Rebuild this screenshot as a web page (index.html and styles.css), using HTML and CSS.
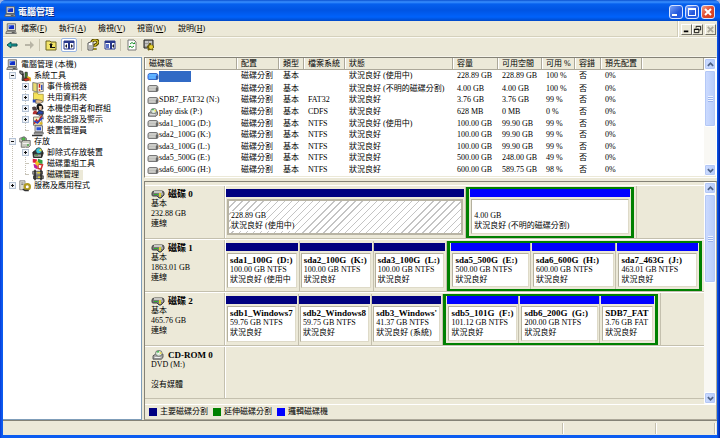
FILE: index.html
```html
<!DOCTYPE html>
<html lang="zh-TW">
<head>
    <meta charset="utf-8">
    <title>電腦管理</title>
    <link rel="stylesheet" href="styles.css">
</head>
<body>

    <!-- shared icons -->
    <svg class="sprite" aria-hidden="true">
        <symbol id="i-computer" viewBox="0 0 16 16">
            <path d="M3 1h11v9H3z" fill="#d8d8d0" stroke="#555"/>
            <path d="M5 3h7v5H5z" fill="#1230c8"/>
            <path d="M5 3h4L5 6z" fill="#5c8cff"/>
            <path d="M2 11h12l1 3H1z" fill="#c8c8c0" stroke="#555"/>
            <path d="M9 12.500h4" stroke="#222"/>
        </symbol>
        <symbol id="i-tools" viewBox="0 0 16 16">
            <path d="M1 1l4 1 1 4-2 1-3-3z" fill="#777" stroke="#222"/>
            <path d="M5 5l3 9H4z" fill="#555" stroke="#222"/>
            <path d="M8 3h3v8H8z" fill="#4a8a30" stroke="#222"/>
            <path d="M6 12l8-2 2 3-8 2z" fill="#d83020" stroke="#521"/>
            <path d="M11 9l4 2v4" stroke="#e0b020" stroke-width="2" fill="none"/>
        </symbol>
        <symbol id="i-event" viewBox="0 0 16 16">
            <path d="M1 2l6 1v12l-6-2z" fill="#e8dc70" stroke="#666"/>
            <path d="M7 3l8-1v12l-8 1z" fill="#fff8d0" stroke="#555"/>
            <path d="M10 4v5M10 11v2" stroke="#d02020" stroke-width="2"/>
            <path d="M13 5v7" stroke="#3050c0" stroke-width="2"/>
        </symbol>
        <symbol id="i-share" viewBox="0 0 16 16">
            <path d="M2 1h5l1 2h7v9H2z" fill="#f5e25a" stroke="#a09030"/>
            <path d="M1 10h5v4H1z" fill="#2848c0"/>
            <path d="M5 10l7 1 3 2-4 2H5z" fill="#e8c090" stroke="#555"/>
        </symbol>
        <symbol id="i-users" viewBox="0 0 16 16">
            <path d="M6 4q1-4 5-3 4 1 4 6-1 3-4 3-5 0-5-6z" fill="#181818"/>
            <path d="M9 4h4v5l-3 1z" fill="#f0d0b0"/>
            <path d="M0 6q3-3 6 0l1 4H1z" fill="#504040"/>
            <path d="M1 15q0-5 4-5l5 5z" fill="#b03030"/>
            <path d="M6 15l3-5 6 1v4z" fill="#2848b0" stroke="#111"/>
        </symbol>
        <symbol id="i-perf" viewBox="0 0 16 16">
            <path d="M2 4h11v11H2z" fill="#f4f0c0" stroke="#555"/>
            <path d="M3 13l3-5 2 3 5-9" stroke="#c02020" stroke-width="2" fill="none"/>
            <path d="M3 9l4 3 7-7" stroke="#2040d0" stroke-width="2" fill="none"/>
            <path d="M9 2l5-1 1 6" stroke="#222" fill="none"/>
            <path d="M10 11h4v3h-4z" fill="#e0b820"/>
        </symbol>
        <symbol id="i-device" viewBox="0 0 16 16">
            <path d="M4 1h10v8H4z" fill="#ddd" stroke="#555"/>
            <path d="M6 3h6v4H6z" fill="#2850d8"/>
            <path d="M3 10h12v2H3z" fill="#bbb" stroke="#555"/>
            <path d="M0 13h14v2H0z" fill="#333"/>
        </symbol>
        <symbol id="i-storage" viewBox="0 0 16 16">
            <path d="M1 3l6-2 3 2v5H1z" fill="#d0d0c8" stroke="#666"/>
            <circle cx="6" cy="4" r="2.500" fill="#48c040" stroke="#666"/>
            <path d="M3 8l3-2h9v7l-2 2H3z" fill="#c8c8c0" stroke="#555"/>
            <path d="M5 10h8" stroke="#fff"/>
            <path d="M11 12h2" stroke="#20a020" stroke-width="2"/>
        </symbol>
        <symbol id="i-removable" viewBox="0 0 16 16">
            <path d="M1 7l4-3h8l2 4-2 6H2z" fill="#333" stroke="#111"/>
            <circle cx="9" cy="5" r="4" fill="#40c8d8" stroke="#333"/>
            <path d="M9 5l3-3 1 4z" fill="#f0e040"/>
            <path d="M3 10h9v3H3z" fill="#a8a8a0"/>
            <path d="M4 11h4" stroke="#20a020"/>
        </symbol>
        <symbol id="i-defrag" viewBox="0 0 16 16">
            <path d="M1 1l6 1v5l-6-1z" fill="#e02040"/>
            <path d="M8 1l6 2v5l-6-1z" fill="#30a040"/>
            <path d="M2 8l5 1v6l-4-2z" fill="#c020a0"/>
            <path d="M8 8l6 1-2 6-4-1z" fill="#fff" stroke="#d03030" stroke-width="2"/>
            <path d="M6 3l4 4-3 4-3-4z" fill="#f0c020"/>
        </symbol>
        <symbol id="i-diskmgmt" viewBox="0 0 16 16">
            <path d="M1 3h13v4H1z" fill="#aaa" stroke="#333"/>
            <path d="M2 9h13v4H2z" fill="#888" stroke="#222"/>
            <path d="M4 1v14M12 1v14" stroke="#222" stroke-width="2"/>
            <path d="M7 5h4M8 11h3" stroke="#e0d030" stroke-width="2"/>
        </symbol>
        <symbol id="i-services" viewBox="0 0 16 16">
            <path d="M1 1h7v12H1z" fill="#dcdcd4" stroke="#777"/>
            <path d="M3 4h3M3 6h3" stroke="#666"/>
            <circle cx="11" cy="9" r="3.500" fill="none" stroke="#b09a20" stroke-width="3"/>
            <path d="M5 12l3 2h5" stroke="#333" stroke-width="2" fill="none"/>
        </symbol>
        <symbol id="i-volume" viewBox="0 0 12 8">
            <path d="M1 3q0-2 2-2h6q2 0 2 2v3q0 1-2 1H2Q1 7 1 6z" fill="#b4b4b0" stroke="#777"/>
            <path d="M2 2h7v1H2z" fill="#e4e4e0"/>
            <path d="M9 3h2v3l-1 1H9z" fill="#666"/>
            <path d="M2 4h6v2H2z" fill="#ccccc8"/>
        </symbol>
        <symbol id="i-cdvolume" viewBox="0 0 14 12">
            <path d="M1 7l3-2h9v4l-2 2H1z" fill="#aaa" stroke="#444"/>
            <ellipse cx="8" cy="4" rx="4" ry="3.500" fill="#d8e8d8" stroke="#666"/>
            <path d="M8 4L5 2l3-1z" fill="#30b040"/>
            <path d="M8 4l3-2v3z" fill="#f0d840"/>
            <circle cx="8" cy="4" r="1" fill="#fff"/>
            <path d="M3 9h7" stroke="#fff"/>
        </symbol>
        <symbol id="i-drive" viewBox="0 0 14 10">
            <path d="M1 4q0-2 3-2h7q2 0 2 2v2L10 9H8L6 7H2Q1 7 1 6z" fill="#777" stroke="#444"/>
            <path d="M3 2h8v2H3z" fill="#c8c8c4"/>
            <path d="M3 5h4v1H3z" fill="#30b030"/>
            <path d="M8 4h2v4H8z" fill="#d8d030"/>
            <path d="M11 4v2" stroke="#ddd"/>
        </symbol>
        <symbol id="i-up" viewBox="0 0 8 8"><path d="M1 5.500l3-3 3 3" fill="none" stroke="#4d6185" stroke-width="2"/></symbol>
        <symbol id="i-down" viewBox="0 0 8 8"><path d="M1 2.500l3 3 3-3" fill="none" stroke="#4d6185" stroke-width="2"/></symbol>
        <symbol id="i-plus" viewBox="0 0 7 7"><path d="M2 3h3v1H2zM3 2h1v3H3z" fill="#111"/></symbol>
        <symbol id="i-minus" viewBox="0 0 7 7"><path d="M2 3h3v1H2z" fill="#111"/></symbol>
    </svg>

    <div class="window">
        <header class="title-bar">
            <svg class="icon"><use href="#i-computer"/></svg>
            <h1>電腦管理</h1>
            <div class="window-buttons">
                <button aria-label="最小化"><svg viewBox="0 0 12 12"><path d="M2 8h5v2H2z" fill="#fff"/></svg></button>
                <button aria-label="最大化"><svg viewBox="0 0 12 12"><path d="M2 2h8v8H2zM3 4v5h6V4z" fill="#fff" fill-rule="evenodd"/></svg></button>
                <button class="close" aria-label="關閉"><svg viewBox="0 0 12 12"><path d="M3 3l6 6M9 3l-6 6" stroke="#fff" stroke-width="2"/></svg></button>
            </div>
        </header>

        <nav class="menu-bar">
            <svg class="icon"><use href="#i-computer"/></svg>
            <div class="menus">
                <button>檔案(<u>F</u>)</button>
                <button>執行(<u>A</u>)</button>
                <button>檢視(<u>V</u>)</button>
                <button>視窗(<u>W</u>)</button>
                <button>說明(<u>H</u>)</button>
            </div>
            <div class="child-buttons">
                <button aria-label="最小化"><svg viewBox="0 0 10 10"><path d="M2 6h5v2H2z"/></svg></button>
                <button aria-label="還原"><svg viewBox="0 0 10 10"><path d="M3.500 3V1.500h5v4H7M1.500 4.500h5v4h-5zM1.500 5h5" fill="none" stroke="#000"/></svg></button>
                <button class="apart" aria-label="關閉"><svg viewBox="0 0 10 10"><path d="M2 2l6 6M8 2l-6 6" stroke="#aca899" stroke-width="2"/></svg></button>
            </div>
        </nav>

        <div class="toolbar">
            <button aria-label="上一頁"><svg viewBox="0 0 12 12"><path d="M1 6l4-3v2h6v2H5v2z" fill="#18a8a0" stroke="#0c4c50"/></svg></button>
            <button aria-label="下一頁"><svg viewBox="0 0 12 12"><path d="M11 6L7 2v3H2v2h5v3z" fill="#b8b5a6"/></svg></button>
            <span class="separator"></span>
            <button aria-label="上一層"><svg viewBox="0 0 12 12"><path d="M1 2h4l1 1h5v8H1z" fill="#f2e468" stroke="#6c6420"/><path d="M4 6l2-2 2 2zM5 6h2v2h3v1H5z" fill="#111"/></svg></button>
            <button class="pressed" aria-label="顯示樹狀目錄"><svg viewBox="0 0 12 12"><path d="M1 2h10v8H1z" fill="#fff" stroke="#28388c"/><path d="M1 2h10v2H1zM5 4h2v6H5z" fill="#28388c"/><path d="M2 7l2-2v4zM10 7L8 5v4z" fill="#222"/></svg></button>
            <span class="separator"></span>
            <button aria-label="說明"><svg viewBox="0 0 12 12"><path d="M1 4l5-2v9H1z" fill="#fff" stroke="#555"/><path d="M2 7h3M2 9h3" stroke="#666"/><path d="M5 3q0-2 3-2t3 2q0 2-3 3v2M8 9v2" fill="none" stroke="#554800" stroke-width="3"/><path d="M5 3q0-2 3-2t3 2q0 2-3 3v2M8 9v2" fill="none" stroke="#ecd830"/></svg></button>
            <button aria-label="顯示窗格"><svg viewBox="0 0 12 12"><path d="M1 2h10v8H1z" fill="#fff" stroke="#28388c"/><path d="M1 2h10v2H1zM6 4h2v6H6z" fill="#28388c"/><path d="M2 5h3v4H2z" fill="#5870c8"/><path d="M10 5v4L8 7z" fill="#222"/></svg></button>
            <span class="separator"></span>
            <button aria-label="重新整理"><svg viewBox="0 0 12 12"><path d="M2 1h6l2 2v8H2z" fill="#fff" stroke="#777"/><path d="M4 5q2-3 4 0M8 7q-2 3-4 0" fill="none" stroke="#189028"/><path d="M7 5h2V3zM5 7H3v2z" fill="#189028"/></svg></button>
            <button aria-label="設定"><svg viewBox="0 0 12 12"><path d="M1 1h9v8H1z" fill="#999" stroke="#222"/><path d="M2 3h3M6 3h3M2 6h3" stroke="#eee"/><path d="M7 4v7M4 8h7M5 6l5 5M10 6l-5 5" stroke="#6c6010" stroke-width="2"/><circle cx="8" cy="8" r="2" fill="#e8d030"/></svg></button>
        </div>

        <main>
            <aside class="tree-pane">
                <ul class="tree">
                    <li>
                        <div class="node root"><svg class="icon"><use href="#i-computer"/></svg><span>電腦管理 (本機)</span></div>
                        <ul>
                            <li>
                                <div class="node"><button class="toggle" aria-label="摺疊"><svg><use href="#i-minus"/></svg></button><svg class="icon"><use href="#i-tools"/></svg><span>系統工具</span></div>
                                <ul>
                                    <li><div class="node"><button class="toggle" aria-label="展開"><svg><use href="#i-plus"/></svg></button><svg class="icon"><use href="#i-event"/></svg><span>事件檢視器</span></div></li>
                                    <li><div class="node"><button class="toggle" aria-label="展開"><svg><use href="#i-plus"/></svg></button><svg class="icon"><use href="#i-share"/></svg><span>共用資料夾</span></div></li>
                                    <li><div class="node"><button class="toggle" aria-label="展開"><svg><use href="#i-plus"/></svg></button><svg class="icon"><use href="#i-users"/></svg><span>本機使用者和群組</span></div></li>
                                    <li><div class="node"><button class="toggle" aria-label="展開"><svg><use href="#i-plus"/></svg></button><svg class="icon"><use href="#i-perf"/></svg><span>效能記錄及警示</span></div></li>
                                    <li><div class="node"><i class="leaf"></i><svg class="icon"><use href="#i-device"/></svg><span>裝置管理員</span></div></li>
                                </ul>
                            </li>
                            <li>
                                <div class="node"><button class="toggle" aria-label="摺疊"><svg><use href="#i-minus"/></svg></button><svg class="icon"><use href="#i-storage"/></svg><span>存放</span></div>
                                <ul>
                                    <li><div class="node"><button class="toggle" aria-label="展開"><svg><use href="#i-plus"/></svg></button><svg class="icon"><use href="#i-removable"/></svg><span>卸除式存放裝置</span></div></li>
                                    <li><div class="node"><i class="leaf"></i><svg class="icon"><use href="#i-defrag"/></svg><span>磁碟重組工具</span></div></li>
                                    <li><div class="node selected"><i class="leaf"></i><svg class="icon"><use href="#i-diskmgmt"/></svg><span>磁碟管理</span></div></li>
                                </ul>
                            </li>
                            <li><div class="node"><button class="toggle" aria-label="展開"><svg><use href="#i-plus"/></svg></button><svg class="icon"><use href="#i-services"/></svg><span>服務及應用程式</span></div></li>
                        </ul>
                    </li>
                </ul>
            </aside>

            <div class="content">
                <section class="volume-pane">
                    <table>
                        <colgroup>
                            <col class="c-name"><col class="c-layout"><col class="c-type"><col class="c-fs"><col class="c-status">
                            <col class="c-size"><col class="c-free"><col class="c-percent"><col class="c-fault"><col class="c-over"><col>
                        </colgroup>
                        <thead>
                            <tr><th>磁碟區</th><th>配置</th><th>類型</th><th>檔案系統</th><th>狀態</th><th>容量</th><th>可用空間</th><th>可用 %</th><th>容錯</th><th>預先配置</th><th></th></tr>
                        </thead>
                        <tbody>
                            <tr class="selected"><td><svg class="vol"><use href="#i-volume"/></svg><span></span></td><td>磁碟分割</td><td>基本</td><td></td><td>狀況良好 (使用中)</td><td>228.89 GB</td><td>228.89 GB</td><td>100 %</td><td>否</td><td>0%</td><td></td></tr>
                            <tr><td><svg class="vol"><use href="#i-volume"/></svg></td><td>磁碟分割</td><td>基本</td><td></td><td>狀況良好 (不明的磁碟分割)</td><td>4.00 GB</td><td>4.00 GB</td><td>100 %</td><td>否</td><td>0%</td><td></td></tr>
                            <tr><td><svg class="vol"><use href="#i-volume"/></svg>SDB7_FAT32 (N:)</td><td>磁碟分割</td><td>基本</td><td>FAT32</td><td>狀況良好</td><td>3.76 GB</td><td>3.76 GB</td><td>99 %</td><td>否</td><td>0%</td><td></td></tr>
                            <tr><td><svg class="vol"><use href="#i-cdvolume"/></svg>play disk (P:)</td><td>磁碟分割</td><td>基本</td><td>CDFS</td><td>狀況良好</td><td>628 MB</td><td>0 MB</td><td>0 %</td><td>否</td><td>0%</td><td></td></tr>
                            <tr><td><svg class="vol"><use href="#i-volume"/></svg>sda1_100G (D:)</td><td>磁碟分割</td><td>基本</td><td>NTFS</td><td>狀況良好 (使用中)</td><td>100.00 GB</td><td>99.90 GB</td><td>99 %</td><td>否</td><td>0%</td><td></td></tr>
                            <tr><td><svg class="vol"><use href="#i-volume"/></svg>sda2_100G (K:)</td><td>磁碟分割</td><td>基本</td><td>NTFS</td><td>狀況良好</td><td>100.00 GB</td><td>99.90 GB</td><td>99 %</td><td>否</td><td>0%</td><td></td></tr>
                            <tr><td><svg class="vol"><use href="#i-volume"/></svg>sda3_100G (L:)</td><td>磁碟分割</td><td>基本</td><td>NTFS</td><td>狀況良好</td><td>100.00 GB</td><td>99.90 GB</td><td>99 %</td><td>否</td><td>0%</td><td></td></tr>
                            <tr><td><svg class="vol"><use href="#i-volume"/></svg>sda5_500G (E:)</td><td>磁碟分割</td><td>基本</td><td>NTFS</td><td>狀況良好</td><td>500.00 GB</td><td>248.00 GB</td><td>49 %</td><td>否</td><td>0%</td><td></td></tr>
                            <tr><td><svg class="vol"><use href="#i-volume"/></svg>sda6_600G (H:)</td><td>磁碟分割</td><td>基本</td><td>NTFS</td><td>狀況良好</td><td>600.00 GB</td><td>589.75 GB</td><td>98 %</td><td>否</td><td>0%</td><td></td></tr>
                        </tbody>
                    </table>
                    <div class="scrollbar">
                        <button aria-label="向上捲動"><svg><use href="#i-up"/></svg></button>
                        <div class="track"><div class="thumb" style="height: 61%"><i></i></div></div>
                        <button aria-label="向下捲動"><svg><use href="#i-down"/></svg></button>
                    </div>
                </section>

                <section class="disk-pane">
                    <div class="disk-scroll">
                        <div class="disks">
                            <div class="disk">
                                <div class="disk-info">
                                    <h2><svg><use href="#i-drive"/></svg>磁碟 0</h2>
                                    <p>基本</p><p>232.88 GB</p><p>連線</p>
                                </div>
                                <div class="space">
                                    <div class="strip ends" style="width: 86%">
                                        <div class="part primary active" style="flex-grow: 243"><div class="bar"></div><div class="body"><h3></h3><p>228.89 GB</p><p>狀況良好 (使用中)</p></div></div>
                                        <div class="extended" style="flex-grow: 165">
                                            <div class="part logical" style="flex-grow: 1"><div class="bar"></div><div class="body"><h3></h3><p>4.00 GB</p><p>狀況良好 (不明的磁碟分割)</p></div></div>
                                        </div>
                                    </div>
                                </div>
                            </div>
                            <div class="disk">
                                <div class="disk-info">
                                    <h2><svg><use href="#i-drive"/></svg>磁碟 1</h2>
                                    <p>基本</p><p>1863.01 GB</p><p>連線</p>
                                </div>
                                <div class="space">
                                    <div class="strip" style="width: 100%">
                                        <div class="part primary" style="flex-grow: 74"><div class="bar"></div><div class="body"><h3>sda1_100G&nbsp; (D:)</h3><p>100.00 GB NTFS</p><p>狀況良好 (使用中</p></div></div>
                                        <div class="part primary" style="flex-grow: 74"><div class="bar"></div><div class="body"><h3>sda2_100G&nbsp; (K:)</h3><p>100.00 GB NTFS</p><p>狀況良好</p></div></div>
                                        <div class="part primary" style="flex-grow: 74"><div class="bar"></div><div class="body"><h3>sda3_100G&nbsp; (L:)</h3><p>100.00 GB NTFS</p><p>狀況良好</p></div></div>
                                        <div class="extended" style="flex-grow: 256">
                                            <div class="part logical" style="flex-grow: 81"><div class="bar"></div><div class="body"><h3>sda5_500G&nbsp; (E:)</h3><p>500.00 GB NTFS</p><p>狀況良好</p></div></div>
                                            <div class="part logical" style="flex-grow: 86"><div class="bar"></div><div class="body"><h3>sda6_600G&nbsp; (H:)</h3><p>600.00 GB NTFS</p><p>狀況良好</p></div></div>
                                            <div class="part logical" style="flex-grow: 83"><div class="bar"></div><div class="body"><h3>sda7_463G&nbsp; (J:)</h3><p>463.01 GB NTFS</p><p>狀況良好</p></div></div>
                                        </div>
                                    </div>
                                </div>
                            </div>
                            <div class="disk">
                                <div class="disk-info">
                                    <h2><svg><use href="#i-drive"/></svg>磁碟 2</h2>
                                    <p>基本</p><p>465.76 GB</p><p>連線</p>
                                </div>
                                <div class="space">
                                    <div class="strip ends" style="width: 91%">
                                        <div class="part primary" style="flex-grow: 73"><div class="bar"></div><div class="body"><h3>sdb1_Windows7</h3><p>59.76 GB NTFS</p><p>狀況良好</p></div></div>
                                        <div class="part primary" style="flex-grow: 73"><div class="bar"></div><div class="body"><h3>sdb2_Windows8</h3><p>59.75 GB NTFS</p><p>狀況良好</p></div></div>
                                        <div class="part primary" style="flex-grow: 71"><div class="bar"></div><div class="body"><h3>sdb3_Windows'</h3><p>41.37 GB NTFS</p><p>狀況良好 (系統)</p></div></div>
                                        <div class="extended" style="flex-grow: 214">
                                            <div class="part logical" style="flex-grow: 73"><div class="bar"></div><div class="body"><h3>sdb5_101G&nbsp; (F:)</h3><p>101.12 GB NTFS</p><p>狀況良好</p></div></div>
                                            <div class="part logical" style="flex-grow: 81"><div class="bar"></div><div class="body"><h3>sdb6_200G&nbsp; (G:)</h3><p>200.00 GB NTFS</p><p>狀況良好</p></div></div>
                                            <div class="part logical" style="flex-grow: 54"><div class="bar"></div><div class="body"><h3>SDB7_FAT</h3><p>3.76 GB FAT</p><p>狀況良好</p></div></div>
                                        </div>
                                    </div>
                                </div>
                            </div>
                            <div class="disk">
                                <div class="disk-info">
                                    <h2><svg><use href="#i-cdvolume"/></svg>CD-ROM 0</h2>
                                    <p>DVD (M:)</p><p>&nbsp;</p><p>沒有媒體</p>
                                </div>
                            </div>
                        </div>
                        <div class="scrollbar">
                            <button aria-label="向上捲動"><svg><use href="#i-up"/></svg></button>
                            <div class="track"><div class="thumb" style="height: 45%"><i></i></div></div>
                            <button aria-label="向下捲動"><svg><use href="#i-down"/></svg></button>
                        </div>
                    </div>
                    <ul class="legend">
                        <li class="primary">主要磁碟分割</li>
                        <li class="ext">延伸磁碟分割</li>
                        <li class="logical">邏輯磁碟機</li>
                    </ul>
                </section>
            </div>
        </main>

        <footer class="status-bar"><span></span><span></span><span></span></footer>
    </div>

</body>
</html>
```
FILE: styles.css
```css
* { box-sizing: border-box; }

body {
    margin: 0;
    background: #9db4e4;
    color: #000;
    font-family: "Liberation Serif", "Noto Sans CJK TC", serif;
    font-size: 8px;
    line-height: 10px;
}

h1, h2, h3, p, ul { margin: 0; padding: 0; }
ul { list-style: none; }
svg { display: block; flex: none; }

button {
    padding: 0;
    border: none;
    background: none;
    font: inherit;
    color: inherit;
}

.sprite { position: absolute; width: 0; height: 0; }
.icon { width: 12px; height: 12px; }

.window {
    display: flex;
    flex-direction: column;
    height: 100vh;
    min-height: 430px;
    padding: 0 3px 3px;
    background: linear-gradient(90deg, #0a3ad8, #0b5cf0 2px, #0b5cf0 calc(100% - 3px), #001ea0);
    border-radius: 6px 6px 0 0;
    overflow: hidden;
}

/* title bar */
.title-bar {
    display: flex;
    align-items: center;
    gap: 2px;
    height: 21px;
    margin: 0 -3px;
    padding: 2px 5px 0 4px;
    background: linear-gradient(#0a50d0, #3a90ff 2px, #0660ee 4px, #0054e3 10px, #0062fb 17px, #0048c8);
    color: #fff;
}

.title-bar h1 {
    flex: 1;
    font-size: 9px;
    font-weight: bold;
    text-shadow: 1px 1px #0a2a80;
}

.window-buttons { display: flex; gap: 2px; }

.window-buttons button {
    width: 14px;
    height: 14px;
    border: 1px solid #d8e4ff;
    border-radius: 3px;
    background: linear-gradient(135deg, #7aa2f8, #2458dc 60%, #2860e8);
}

.window-buttons .close { background: linear-gradient(135deg, #f0a088, #e0482c 50%, #d03c18); }

/* menu */
.menu-bar {
    display: flex;
    align-items: center;
    height: 17px;
    padding: 0 1px 0 2px;
    background: #ece9d8;
    border-bottom: 1px solid #fbfaf4;
    box-shadow: inset 0 -1px #d5d1bd;
}

.menus {
    display: flex;
    flex: 1;
    gap: 12px;
    padding-left: 4px;
}

.child-buttons {
    display: flex;
    align-items: center;
    height: 16px;
    padding-left: 2px;
    border-left: 1px solid #fff;
    box-shadow: -1px 0 #d0ccb8;
}

.child-buttons button {
    width: 11px;
    height: 11px;
    border: 1px solid;
    border-color: #fff #716f64 #716f64 #fff;
}

.child-buttons .apart { margin-left: 2px; }

/* toolbar */
.toolbar {
    display: flex;
    align-items: center;
    gap: 4px;
    height: 19px;
    padding: 0 2px 4px;
    background: #ece9d8;
    border-bottom: 1px solid #f6f4ea;
}

.toolbar button {
    display: flex;
    align-items: center;
    justify-content: center;
    width: 13px;
    height: 14px;
}

.toolbar button svg { width: 12px; height: 12px; }

.toolbar .pressed {
    width: 16px;
    border: 1px solid #98b5e2;
    border-radius: 2px;
    background: #fff;
}

.separator {
    width: 1px;
    height: 12px;
    background: #c8c4b0;
}

main {
    display: flex;
    flex: 1;
    gap: 2px;
    min-height: 0;
    background: #ece9d8;
}

/* tree */
.tree-pane {
    flex: 0 0 139px;
    padding-top: 1px;
    background: #fff;
    border: 1px solid #7f9db9;
    border-left: none;
    overflow: hidden;
}

.node {
    position: relative;
    display: flex;
    align-items: center;
    gap: 3px;
    height: 11px;
    padding-left: 6px;
    white-space: nowrap;
}

.node.root { padding-left: 3px; }
.tree ul { position: relative; }
.tree ul ul .node { padding-left: 19px; }

.tree ul::before {
    content: "";
    position: absolute;
    top: 0;
    bottom: 6px;
    left: 9px;
    border-left: 1px dotted #c4c0b4;
}

.tree ul ul::before { left: 22px; }

.toggle {
    width: 7px;
    height: 7px;
    background: #eef1f6;
    box-shadow: inset 0 0 0 1px #b4c2d4;
}

.toggle svg { width: 7px; height: 7px; }

.leaf {
    width: 7px;
    height: 1px;
    background: linear-gradient(90deg, transparent 3px, #c8c4b8 3px);
}

.node.selected span {
    padding: 0 4px 0 1px;
    margin-left: -1px;
    background: #ece9d8;
}

.content {
    display: flex;
    flex: 1;
    flex-direction: column;
    gap: 3px;
    min-width: 0;
}

/* volume list */
.volume-pane {
    display: flex;
    flex: 0 0 121px;
    padding-bottom: 1px;
    border: 1px solid;
    border-color: #848276 #fff #fff #848276;
    background: #ece9d8;
}

table {
    flex: 1;
    width: 0;
    height: 118px;
    table-layout: fixed;
    border-collapse: collapse;
    background: #fff;
}

th, td {
    padding: 0 0 0 4px;
    font-weight: normal;
    text-align: left;
    white-space: nowrap;
}

thead tr { height: 12px; }

th {
    background: #ece9d8;
    box-shadow: inset -1px -1px #aca899, inset 1px 0 #fff;
}

.c-name { width: 92px; }
.c-layout { width: 42px; }
.c-type { width: 25px; }
.c-fs { width: 41px; }
.c-status { width: 108px; }
.c-size { width: 45px; }
.c-free { width: 44px; }
.c-percent { width: 33px; }
.c-fault { width: 26px; }
.c-over { width: 41px; }

td:first-child { padding-left: 2px; }

.vol {
    display: inline-block;
    width: 12px;
    height: 9px;
    vertical-align: middle;
}

tr.selected .vol { filter: brightness(0.7) sepia(1) hue-rotate(180deg) saturate(4); }

tr.selected span {
    display: inline-block;
    width: 32px;
    height: 11px;
    background: #316ac5;
    vertical-align: middle;
}

/* scrollbars */
.scrollbar {
    display: flex;
    flex: 0 0 12px;
    flex-direction: column;
    background: #f9f8f4;
}

.scrollbar button, .thumb {
    border: 1px solid #fff;
    border-radius: 2px;
    background: linear-gradient(90deg, #cddcff, #b7cbfa);
    box-shadow: inset 0 0 0 1px #b4c8f6;
}

.scrollbar button {
    display: flex;
    align-items: center;
    justify-content: center;
    height: 12px;
}

.scrollbar button svg { width: 7px; height: 7px; }
.track { flex: 1; }

.thumb {
    display: flex;
    align-items: center;
    justify-content: center;
}

.thumb i {
    width: 5px;
    height: 6px;
    background: repeating-linear-gradient(#eef4ff 0 1px, #9cb4ec 1px 2px);
}

/* disks */
.disk-pane {
    display: flex;
    flex: 1;
    flex-direction: column;
    min-height: 0;
    border: 1px solid;
    border-color: #848276 #aca899 #aca899 #848276;
}

.disk-scroll {
    display: flex;
    flex: 1;
    min-height: 0;
}

.disks {
    display: flex;
    flex: 1;
    flex-direction: column;
    min-width: 0;
    padding: 3px 0 5px;
}

.disk {
    display: flex;
    flex: 1;
    border-top: 1px solid #fff;
    border-bottom: 1px solid #c4c0ae;
}

.disk-info {
    flex: 0 0 80px;
    padding: 3px 0 0 6px;
    border-right: 1px solid #c4c0ae;
    box-shadow: 1px 0 #fff;
}

.disk h2 {
    display: flex;
    align-items: center;
    gap: 3px;
    font-size: 9px;
    line-height: 10px;
}

.disk h2 svg { width: 14px; height: 10px; }

.space {
    display: flex;
    flex: 1;
    min-width: 0;
}

.strip {
    display: flex;
    min-width: 0;
    padding: 1px 2px 0 1px;
}

.strip.ends { border-right: 1px solid #c4c0ae; }

.part {
    display: flex;
    flex: 1 1 0;
    flex-direction: column;
    gap: 2px;
    min-width: 0;
    padding: 2px 1px 3px 0;
    border-right: 1px solid #c4c0ae;
}

.bar { height: 8px; }
.part.primary .bar { background: #000080; }
.part.logical .bar { background: #0000ff; }

.body {
    flex: 1;
    margin: 0 1px;
    padding: 1px 1px 0 2px;
    border: 1px solid;
    border-color: #b4b09e #dedac8 #dedac8 #b4b09e;
    background: #fff;
    white-space: nowrap;
    overflow: hidden;
}

.body h3 {
    height: 10px;
    font-size: 9px;
    line-height: 10px;
}

.active .body {
    padding: 0 2px;
    border: 2px solid #b8b4a4;
    background: repeating-linear-gradient(135deg, #fff 0 4px, #c4c4c4 4px 5px);
}

.active .body p {
    width: fit-content;
    background: #fff;
}

.extended {
    display: flex;
    flex: 1 1 0;
    min-width: 0;
    border: 2px solid #008000;
    border-width: 2px 3px;
}

.extended .part { padding: 0 0 2px 1px; }
.extended .part:last-child { border-right: none; padding-right: 1px; }

.legend {
    display: flex;
    gap: 5px;
    height: 15px;
    padding: 2px 4px;
    border-top: 1px solid #fff;
}

.legend li {
    display: flex;
    align-items: center;
    gap: 3px;
}

.legend li::before {
    content: "";
    width: 8px;
    height: 8px;
}

.legend .primary::before { background: #000080; }
.legend .ext::before { background: #008000; }
.legend .logical::before { background: #0000ff; }

/* status bar */
.status-bar {
    display: flex;
    height: 15px;
    padding: 2px 2px 1px 0;
    background: #ece9d8;
    border-top: 1px solid #848276;
}

.status-bar span {
    flex: 0 0 13%;
    border-right: 1px solid #c4c0ae;
    box-shadow: 1px 0 #fff;
}

.status-bar span:first-child { flex: 1; }
.status-bar span:last-child { flex-basis: 59px; }
```
